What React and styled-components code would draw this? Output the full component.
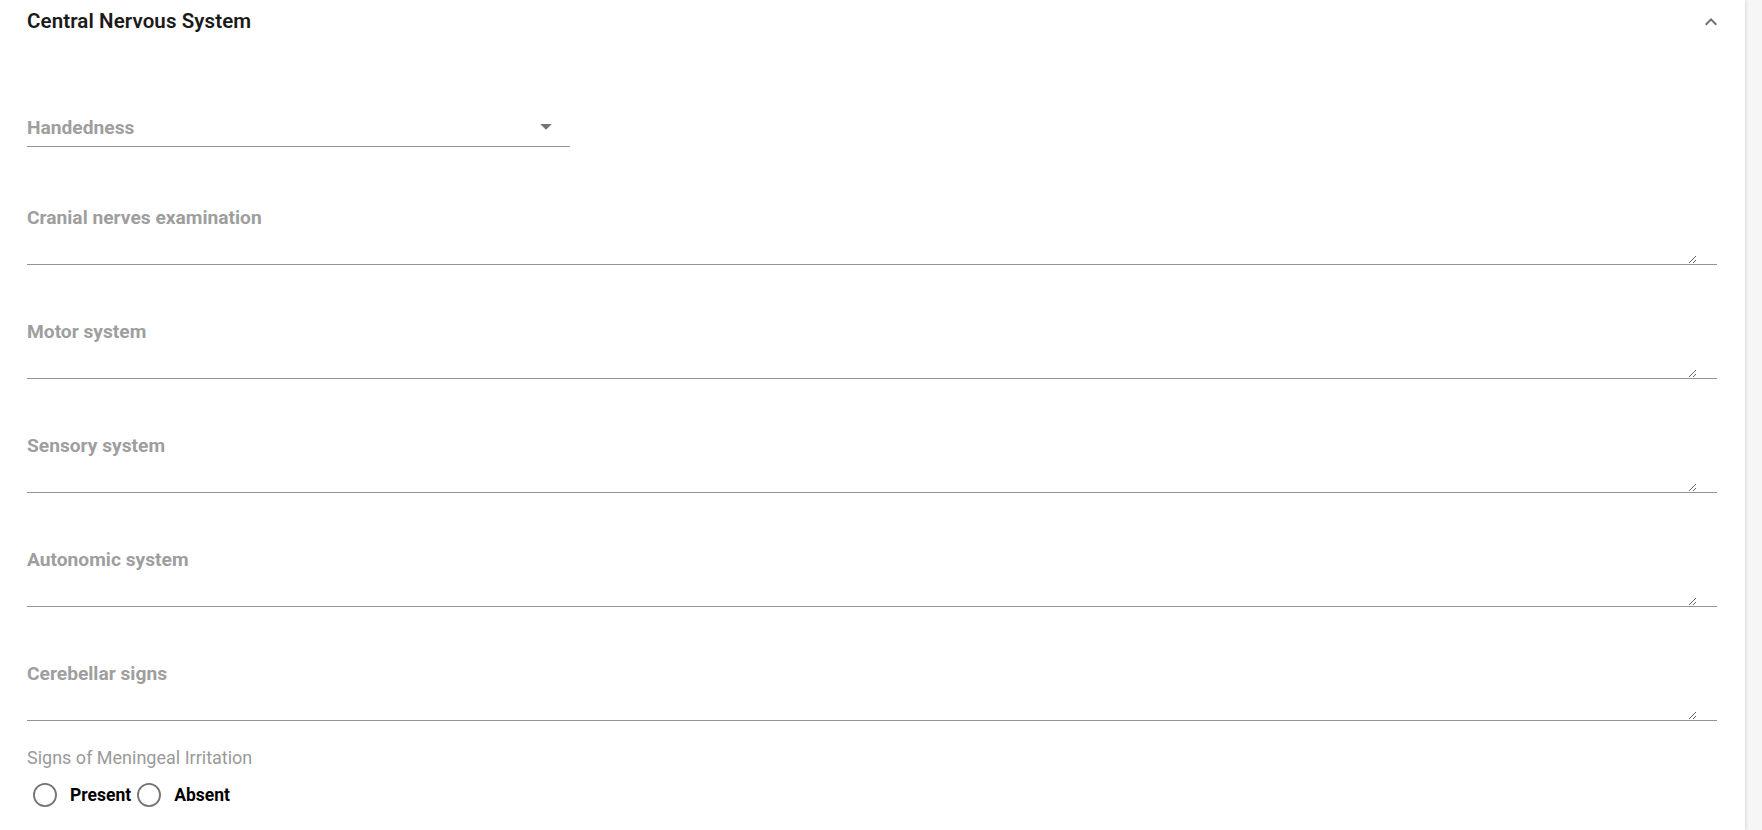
import styled, { createGlobalStyle } from "styled-components";

const GlobalStyle = createGlobalStyle`
  body {
    margin: 0;
    background: #f6f6f6;
    font-family: Roboto, "Liberation Sans", sans-serif;
  }
`;

const Card = styled.div`
  width: 1745px;
  min-height: 830px;
  box-sizing: border-box;
  padding: 0 28px 0 27px;
  background: #fff;
  box-shadow: 1px 0 3px rgba(0, 0, 0, 0.12);
`;

const Header = styled.div`
  height: 42px;
  display: flex;
  align-items: center;
  justify-content: space-between;
`;

const Title = styled.h2`
  margin: 0;
  font-size: 20.5px;
  line-height: 24px;
  font-weight: 600;
  color: #1a1a1a;
  letter-spacing: 0.1px;
`;

const IconButton = styled.button`
  border: none;
  background: none;
  padding: 0;
  margin-right: -6px;
  margin-top: 2px;
  display: flex;
  color: #6e6e6e;
`;

const SelectBox = styled.div`
  margin-top: 70px;
  width: 543px;
  height: 24px;
  display: flex;
  align-items: center;
  justify-content: space-between;
  padding: 4px 0 6px;
  border-bottom: 1px solid #949494;
  svg {
    margin: -2px 10px -2px 0;
  }
`;

const FieldLabel = styled.div`
  font-size: 19.2px;
  line-height: 24px;
  font-weight: 700;
  color: #9e9e9e;
`;

const Field = styled.div`
  margin-top: ${(p) => p.$gap}px;
`;

const AreaWrap = styled.div`
  height: 34px;
  border-bottom: 1px solid #949494;
`;

const TextArea = styled.textarea`
  display: block;
  width: calc(100% - 20px);
  height: 34px;
  box-sizing: border-box;
  border: none;
  outline: none;
  resize: vertical;
  padding: 0;
  font: inherit;
  background: transparent;
`;

const GroupLabel = styled.div`
  margin-top: 25px;
  font-size: 18px;
  line-height: 24px;
  color: #9a9a9a;
`;

const RadioRow = styled.div`
  margin-top: 7px;
  height: 36px;
  display: flex;
  align-items: center;
`;

const RadioOption = styled.label`
  display: flex;
  align-items: center;
  font-size: 17.5px;
  font-weight: 700;
  color: #000;
  svg {
    margin: 0 12px 0 5px;
  }
`;

const ChevronUp = () => (
  <svg width="24" height="24" viewBox="0 0 24 24" fill="currentColor">
    <path d="M7.41 15.41 12 10.83l4.59 4.58L18 14l-6-6-6 6z" />
  </svg>
);

const DropArrow = () => (
  <svg width="28" height="28" viewBox="0 0 24 24" fill="#757575">
    <path d="M7 10l5 5 5-5z" transform="translate(0 -1.5)" />
  </svg>
);

const RadioIcon = () => (
  <svg width="26" height="26" viewBox="0 0 24 24">
    <circle cx="12" cy="12" r="10.2" fill="none" stroke="#757575" strokeWidth="1.7" />
  </svg>
);

const fields = [
  "Cranial nerves examination",
  "Motor system",
  "Sensory system",
  "Autonomic system",
  "Cerebellar signs",
];

export default function App() {
  return (
    <>
      <GlobalStyle />
      <Card>
        <Header>
          <Title>Central Nervous System</Title>
          <IconButton>
            <ChevronUp />
          </IconButton>
        </Header>
        <SelectBox>
          <FieldLabel>Handedness</FieldLabel>
          <DropArrow />
        </SelectBox>
        {fields.map((f, i) => (
          <Field key={f} $gap={i === 0 ? 59 : 55}>
            <FieldLabel>{f}</FieldLabel>
            <AreaWrap>
              <TextArea />
            </AreaWrap>
          </Field>
        ))}
        <GroupLabel>Signs of Meningeal Irritation</GroupLabel>
        <RadioRow>
          <RadioOption>
            <RadioIcon />
            Present
          </RadioOption>
          <RadioOption>
            <RadioIcon />
            Absent
          </RadioOption>
        </RadioRow>
      </Card>
    </>
  );
}
